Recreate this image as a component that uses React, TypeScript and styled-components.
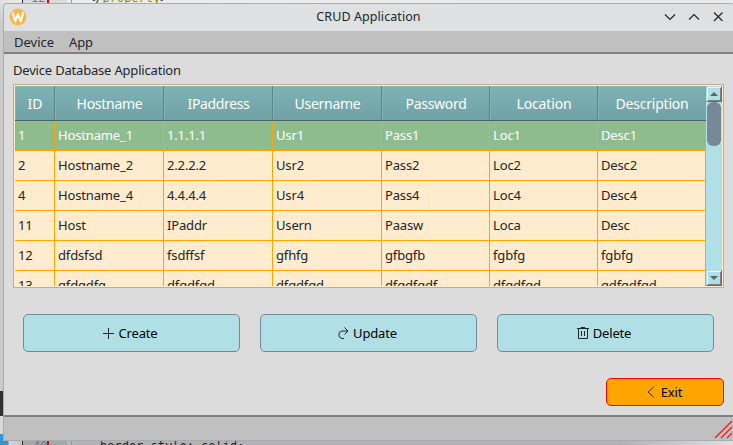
import React from 'react';
import styled, { createGlobalStyle, css } from 'styled-components';

const GlobalStyle = createGlobalStyle`
  * { box-sizing: border-box; }
  body { margin: 0; overflow: hidden; background: #dcdcdc; }
`;

const Desktop = styled.div`
  width: 733px;
  height: 445px;
  display: grid;
  grid-template-columns: 3px 730px;
  grid-template-rows: 3px 438px 4px;
  overflow: hidden;
  font-family: 'Noto Sans', 'Open Sans', sans-serif;
  font-size: 13px;
  color: #232629;
`;

const EditorStrip = styled.div<{ $bottom?: boolean }>`
  grid-column: 1 / -1;
  display: flex;
  overflow: hidden;
  font-family: 'DejaVu Sans Mono', monospace;
  font-size: 12px;
  line-height: 14px;
  white-space: pre;
  background: ${p => (p.$bottom
    ? 'linear-gradient(90deg, #2f94cf 8px, #d4d4d4 9px, #c4c4c4 22px, #b2b2b2 80px, #b2b2b2 620px, #dedede)'
    : 'linear-gradient(90deg, #dedede, #ececec 22px, #e9e9e9)')};
`;

const Gutter = styled.div<{ $bottom?: boolean }>`
  flex: none;
  width: 45px;
  height: 4px;
  margin-left: 22px;
  padding-left: ${p => (p.$bottom ? 10 : 8)}px;
  border-left: 1px solid #26282b;
  background: ${p => (p.$bottom ? '#a5a8ab' : '#d9dbdd')};
  color: #777b80;
`;

const Fold = styled.div`
  flex: none;
  width: 5px;
  height: 4px;
  border-right: 1px solid #999;
`;

const Shift = styled.div<{ $up: number }>`
  margin-top: -${p => p.$up}px;
`;

const Code = styled.div<{ $left: number; $color: string; $up: number }>`
  margin-left: ${p => p.$left}px;
  margin-top: -${p => p.$up}px;
  color: ${p => p.$color};
`;

const ChangeMark = styled.div`
  flex: none;
  width: 2px;
  height: 4px;
  margin-left: -20px;
  margin-right: 18px;
  background: #d9000d;
`;

const Side = styled.div`
  background: linear-gradient(#dedede, #cacaca 20px, #cacaca 388px, #303133 388px, #303133 413px, #d9d9d9 413px, #d9d9d9 431px, #3498d0 431px);
`;

const Window = styled.div`
  display: flex;
  flex-direction: column;
  border: 1px solid #a9acb0;
  border-right: 0;
  border-radius: 4px 3px 0 0;
  background: #dcdcdc;
  overflow: hidden;
`;

const TitleBar = styled.header`
  flex: none;
  height: 27px;
  display: grid;
  grid-template-columns: 100px 1fr 100px;
  align-items: center;
  padding: 0 0 1px;
  background: #dee0e2;
`;

const Logo = styled.svg`
  display: block;
  margin-left: 5px;
`;

const Title = styled.div`
  text-align: center;
  font-size: 12.5px;
  letter-spacing: 0.08px;
  line-height: 17px;
  padding-bottom: 2px;
`;

const WindowControls = styled.div`
  display: flex;
  gap: 12px;
  margin-left: 31px;
  svg { display: block; }
`;

const MenuBar = styled.nav`
  flex: none;
  height: 23px;
  display: flex;
  align-items: center;
  gap: 15px;
  padding: 1px 10px 0;
  border-bottom: 2px solid #808080;
  background: #c0c0c0;
`;

const Spaced = styled.span<{ $ls?: number }>`
  letter-spacing: ${p => p.$ls ?? -0.15}px;
  white-space: nowrap;
`;

const Content = styled.main`
  flex: 1;
  min-height: 0;
  display: flex;
  flex-direction: column;
  padding: 8px 9px 0;
`;

const Heading = styled.div`
  height: 22px;
  line-height: 17px;
`;

const TableFrame = styled.section`
  flex: none;
  width: 711px;
  height: 204px;
  display: flex;
  border: 1px solid #c3ac90;
  padding: 1px;
  background: #ffebcd;
`;

const TableView = styled.div`
  width: 691px;
  height: 200px;
  overflow: hidden;
`;

const columns = css`
  display: grid;
  grid-template-columns: 40px 109px 109px 109px 108px 108px 108px;
`;

const HeaderRow = styled.div`
  ${columns}
  height: 35px;
  border-bottom: 1px solid #466668;
  background: linear-gradient(#7db2b4, #70a2a4);
`;

const HeaderCell = styled.div`
  display: flex;
  align-items: center;
  justify-content: center;
  font-size: 14px;
  color: #fff;
  padding: 1px 0 0 1px;
  border-right: 1px solid #5b8688;
  box-shadow: inset 1px 0 #82b5b7, inset 0 1px #88b9bb;
  &:last-child { border-right-color: #76a9ab; }
`;

const Row = styled.div<{ $selected?: boolean }>`
  ${columns}
  height: 30px;
  background: ${p => (p.$selected ? '#8fbc8f' : '#ffebcd')};
  color: ${p => (p.$selected ? '#fff' : '#232629')};
`;

const Cell = styled.div`
  padding-left: 3px;
  line-height: 29px;
  border-right: 1px solid #ffa500;
  border-bottom: 1px solid #ffa500;
  overflow: hidden;
`;

const ScrollBar = styled.div`
  width: 16px;
  height: 200px;
  display: flex;
  flex-direction: column;
  background: #b0e0e6;
`;

const ScrollButton = styled.div`
  width: 16px;
  height: 16px;
  display: flex;
  align-items: center;
  justify-content: center;
  border: 1px solid;
  border-color: #b0e0e6 #696969 #696969 #b0e0e6;
  box-shadow: inset 1px 1px #fff, inset -1px -1px #808080;
`;

const ScrollThumb = styled.div`
  width: 14px;
  height: 44px;
  margin: 0 1px auto;
  border-radius: 6px;
  background: #778899;
`;

const Actions = styled.div`
  display: flex;
  gap: 20px;
  margin: 26px 10px 0;
`;

const Button = styled.button<{ $exit?: boolean }>`
  flex: none;
  width: ${p => (p.$exit ? 118 : 217)}px;
  height: ${p => (p.$exit ? 28 : 38)}px;
  padding: 0 3px 0 0;
  margin: ${p => (p.$exit ? '26px 0 0 593px' : '0')};
  display: flex;
  align-items: center;
  justify-content: center;
  gap: 4px;
  font: inherit;
  color: #000;
  border: 1px solid ${p => (p.$exit ? '#f00' : '#778899')};
  border-radius: 5px;
  background: ${p => (p.$exit ? '#ffa500' : '#b0e0e6')};
`;

const LineIcon = styled.svg`
  display: block;
  fill: none;
  stroke: #232629;
`;

const StatusBar = styled.footer`
  flex: none;
  height: 25px;
  display: flex;
  justify-content: flex-end;
  align-items: flex-end;
  border-top: 2px solid #808080;
  background: #c0c0c0;
`;

const headers: [string, number][] = [
  ['ID', 0], ['Hostname', -0.27], ['IPaddress', -0.35], ['Username', -0.27],
  ['Password', -0.3], ['Location', -0.15], ['Description', -0.2],
];

const rows = [
  ['1', 'Hostname_1', '1.1.1.1', 'Usr1', 'Pass1', 'Loc1', 'Desc1'],
  ['2', 'Hostname_2', '2.2.2.2', 'Usr2', 'Pass2', 'Loc2', 'Desc2'],
  ['4', 'Hostname_4', '4.4.4.4', 'Usr4', 'Pass4', 'Loc4', 'Desc4'],
  ['11', 'Host', 'IPaddr', 'Usern', 'Paasw', 'Loca', 'Desc'],
  ['12', 'dfdsfsd', 'fsdffsf', 'gfhfg', 'gfbgfb', 'fgbfg', 'fgbfg'],
  ['13', 'gfdgdfg', 'dfgdfgd', 'dfgdfgd', 'dfgdfgdf', 'dfgdfgd', 'gdfgdfgd'],
];

export default function App() {
  return (
    <>
      <GlobalStyle />
      <Desktop>
        <EditorStrip>
          <Gutter><Shift $up={9}>12</Shift></Gutter>
          <ChangeMark />
          <Fold />
          <Code $left={16} $color="#22252a" $up={9}>{'</'}</Code>
          <Code $left={0} $color="#908b12" $up={9}>property</Code>
          <Code $left={0} $color="#22252a" $up={9}>{'>'}</Code>
        </EditorStrip>
        <Side />
        <Window>
          <TitleBar>
            <Logo width="18" height="18" viewBox="0 0 18 18">
              <circle cx="9" cy="9" r="8.4" fill="#f9b747" />
              <path d="M3.8 4.3 6.2 13.3 9 6.2 11.8 13.3 14.2 4.3" fill="none" stroke="#fff" strokeWidth="2.1" strokeLinejoin="round" />
            </Logo>
            <Title>CRUD Application</Title>
            <WindowControls>
              <LineIcon width="12" height="12" strokeWidth="1.2"><path d="m1 3.5 5 5 5-5" /></LineIcon>
              <LineIcon width="12" height="12" strokeWidth="1.2"><path d="m1 8.5 5-5 5 5" /></LineIcon>
              <LineIcon width="12" height="12" strokeWidth="1.2"><path d="m2 1.500 8.500 8.500m0-8.500-8.500 8.500" /></LineIcon>
            </WindowControls>
          </TitleBar>
          <MenuBar><Spaced $ls={0}>Device</Spaced><Spaced>App</Spaced></MenuBar>
          <Content>
            <Heading><Spaced $ls={-0.19}>Device Database Application</Spaced></Heading>
            <TableFrame>
              <TableView>
                <HeaderRow>
                  {headers.map(([h, ls]) => <HeaderCell key={h}><Spaced $ls={ls}>{h}</Spaced></HeaderCell>)}
                </HeaderRow>
                {rows.map((r, i) => (
                  <Row key={r[0]} $selected={i === 0}>
                    {r.map((c, j) => <Cell key={j}><Spaced>{c}</Spaced></Cell>)}
                  </Row>
                ))}
              </TableView>
              <ScrollBar>
                <ScrollButton><svg width="8" height="4"><path d="M0 4 4 0 8 4Z" fill="#50686c" /></svg></ScrollButton>
                <ScrollThumb />
                <ScrollButton><svg width="8" height="4"><path d="M0 0h8L4 4Z" fill="#50686c" /></svg></ScrollButton>
              </ScrollBar>
            </TableFrame>
            <Actions>
              <Button>
                <LineIcon width="12" height="12"><path d="M6.5 1v11M1 6.5h11" /></LineIcon>
                <Spaced>Create</Spaced>
              </Button>
              <Button>
                <LineIcon width="12" height="12"><path d="M7.5.5 11 4 7.5 7.5M11 4H5a3.8 3.8 0 0 0 0 7.5h2" /></LineIcon>
                <Spaced>Update</Spaced>
              </Button>
              <Button>
                <LineIcon width="12" height="12"><path d="M0 1.5h12M4 1.5v-1h4v1M1.5 1.5v10h9v-10M4.5 4v5M7.5 4v5" /></LineIcon>
                <Spaced>Delete</Spaced>
              </Button>
            </Actions>
            <Button $exit>
              <LineIcon width="12" height="12"><path d="M8.5 1 3 6l5.500 5" /></LineIcon>
              <Spaced>Exit</Spaced>
            </Button>
          </Content>
          <StatusBar>
            <svg width="19" height="20"><path d="M1 18 18 1M7 18 18 7M13 18l5-5" stroke="#f0141e" strokeWidth="1.2" /></svg>
          </StatusBar>
        </Window>
        <EditorStrip $bottom>
          <Gutter $bottom><Shift $up={2}>40</Shift></Gutter>
          <ChangeMark />
          <Fold />
          <Code $left={28} $color="#22252a" $up={2}>border-style: solid;</Code>
        </EditorStrip>
      </Desktop>
    </>
  );
}
